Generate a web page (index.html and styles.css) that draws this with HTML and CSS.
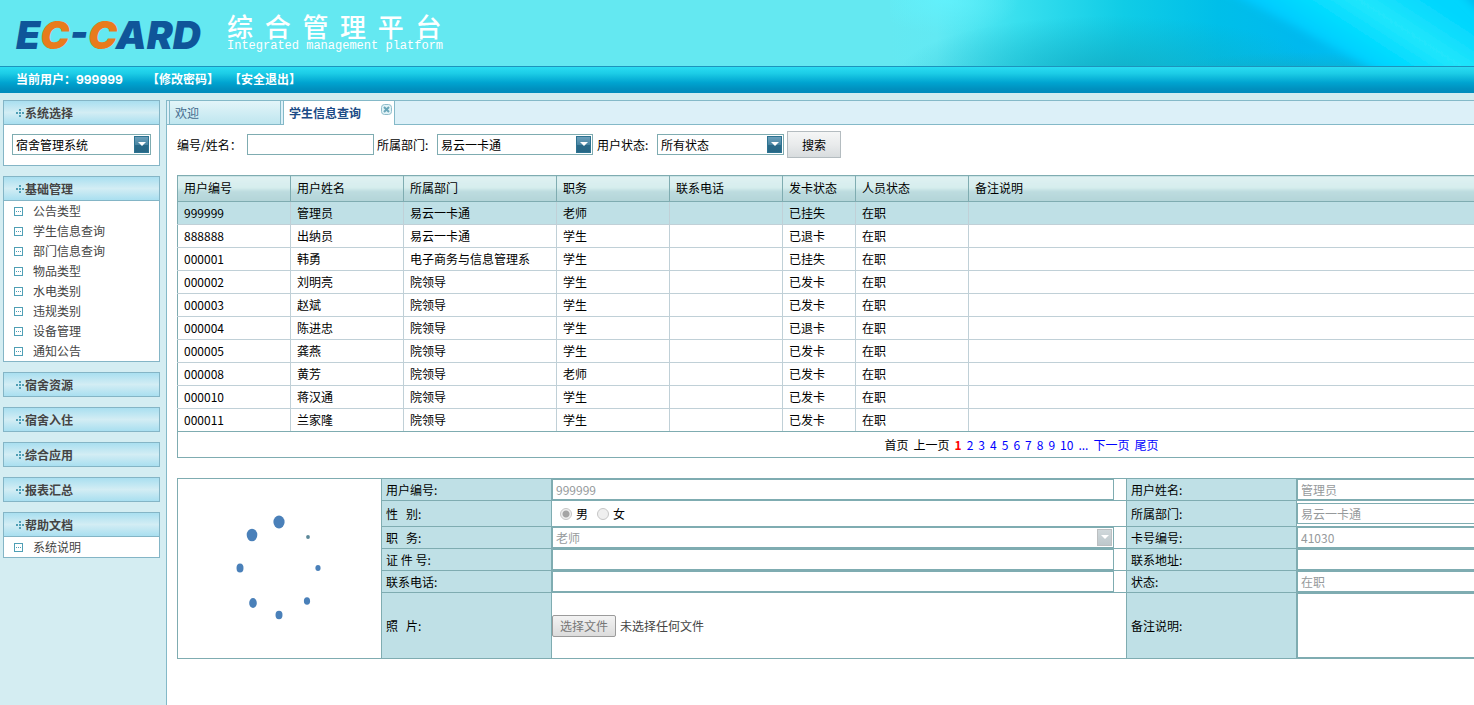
FILE: index.html
```html
<!DOCTYPE html>
<html lang="zh-CN">
<head>
<meta charset="utf-8">
<title>综合管理平台</title>
<link rel="stylesheet" href="styles.css">
</head>
<body>
<header class="banner">
  <svg class="banner-art" viewBox="0 0 584 66" preserveAspectRatio="none" aria-hidden="true">
    <defs>
      <linearGradient id="sea" x1="0" y1="0" x2="1" y2="0">
        <stop offset="0" stop-color="#64e8f1"/>
        <stop offset=".08" stop-color="#62e9f3"/>
        <stop offset=".22" stop-color="#38dfee"/>
        <stop offset=".4" stop-color="#10cce6"/>
        <stop offset=".56" stop-color="#00bfe9"/>
        <stop offset=".7" stop-color="#00b9ee"/>
        <stop offset="1" stop-color="#00c4f4"/>
      </linearGradient>
      <radialGradient id="glow">
        <stop offset="0" stop-color="#62f2fd" stop-opacity=".8"/>
        <stop offset="1" stop-color="#62f2fd" stop-opacity="0"/>
      </radialGradient>
      <radialGradient id="shade">
        <stop offset="0" stop-color="#12aac2" stop-opacity=".8"/>
        <stop offset="1" stop-color="#12aac2" stop-opacity="0"/>
      </radialGradient>
      <linearGradient id="beam" gradientUnits="userSpaceOnUse" x1="420" y1="42" x2="476" y2="-44">
        <stop offset="0" stop-color="#00c8ff"/>
        <stop offset=".3" stop-color="#00daff"/>
        <stop offset=".6" stop-color="#22e6fc"/>
        <stop offset="1" stop-color="#00d6fe"/>
      </linearGradient>
      <filter id="soft" x="-10%" y="-30%" width="120%" height="160%"><feGaussianBlur stdDeviation="4"/></filter>
    </defs>
    <rect width="584" height="66" fill="url(#sea)"/>
    <ellipse cx="55" cy="0" rx="75" ry="34" fill="url(#glow)"/>
    <ellipse cx="220" cy="72" rx="210" ry="56" fill="url(#shade)"/>
    <ellipse cx="410" cy="78" rx="150" ry="26" fill="url(#shade)"/>
    <path d="M330-12L400 24Q450 52 512 84L620 84V-12Z" fill="url(#beam)" filter="url(#soft)"/>
    <path d="M568-10L604-10V26Z" fill="#00bdf0" filter="url(#soft)"/>
  </svg>
  <div class="logo"><span class="blue">E</span><span class="orange">C</span><span class="blue">-</span><span class="orange">C</span><span class="blue">ARD</span></div>
  <div class="product">
    <h1 class="product-name">综  合  管  理  平  台</h1>
    <p class="product-sub">Integrated management platform</p>
  </div>
</header>
<nav class="userbar">
  <span class="current">当前用户：999999</span>
  <a href="#">【修改密码】</a>
  <a href="#">【安全退出】</a>
</nav>
<div class="layout">
  <aside class="sidebar">
    <section class="panel">
      <h2 class="panel-title"><i class="cross"></i><label for="system">系统选择</label></h2>
      <div class="panel-select"><span class="select"><select id="system"><option>宿舍管理系统</option></select></span></div>
    </section>
    <section class="panel">
      <h2 class="panel-title"><i class="cross"></i>基础管理</h2>
      <ul class="menu">
        <li><a href="#">公告类型</a></li>
        <li><a href="#">学生信息查询</a></li>
        <li><a href="#">部门信息查询</a></li>
        <li><a href="#">物品类型</a></li>
        <li><a href="#">水电类别</a></li>
        <li><a href="#">违规类别</a></li>
        <li><a href="#">设备管理</a></li>
        <li><a href="#">通知公告</a></li>
      </ul>
    </section>
    <section class="panel"><h2 class="panel-title"><i class="cross"></i>宿舍资源</h2></section>
    <section class="panel"><h2 class="panel-title"><i class="cross"></i>宿舍入住</h2></section>
    <section class="panel"><h2 class="panel-title"><i class="cross"></i>综合应用</h2></section>
    <section class="panel"><h2 class="panel-title"><i class="cross"></i>报表汇总</h2></section>
    <section class="panel">
      <h2 class="panel-title"><i class="cross"></i>帮助文档</h2>
      <ul class="menu"><li><a href="#">系统说明</a></li></ul>
    </section>
  </aside>
  <main class="main">
    <div class="tabs">
      <button class="tab" type="button">欢迎</button>
      <div class="tab active">
        <button class="tab-label" type="button">学生信息查询</button>
        <button class="tab-close" type="button" aria-label="关闭">
          <svg viewBox="0 0 11 11" width="11" height="11"><rect x=".5" y=".5" width="10" height="10" rx="3" fill="#e2f3f7" stroke="#8fbccb"/><path d="M3 3L8 8M8 3L3 8" stroke="#6ba6b9" stroke-width="2"/></svg>
        </button>
      </div>
    </div>
    <div class="content">
      <form class="filter">
        <label class="first" for="key">编号/姓名：</label>
        <input class="text key" id="key" type="text">
        <label for="dept">所属部门:</label>
        <span class="select dept"><select id="dept"><option>易云一卡通</option></select></span>
        <label for="state">用户状态:</label>
        <span class="select state"><select id="state"><option>所有状态</option></select></span>
        <button class="search" type="button">搜索</button>
      </form>
      <table class="grid">
        <colgroup><col class="w-m"><col class="w-m"><col class="w-l"><col class="w-m"><col class="w-m"><col class="w-s"><col class="w-m"><col></colgroup>
        <thead><tr><th>用户编号</th><th>用户姓名</th><th>所属部门</th><th>职务</th><th>联系电话</th><th>发卡状态</th><th>人员状态</th><th>备注说明</th></tr></thead>
        <tbody>
          <tr class="selected"><td>999999</td><td>管理员</td><td>易云一卡通</td><td>老师</td><td></td><td>已挂失</td><td>在职</td><td></td></tr>
          <tr><td>888888</td><td>出纳员</td><td>易云一卡通</td><td>学生</td><td></td><td>已退卡</td><td>在职</td><td></td></tr>
          <tr><td>000001</td><td>韩勇</td><td>电子商务与信息管理系</td><td>学生</td><td></td><td>已挂失</td><td>在职</td><td></td></tr>
          <tr><td>000002</td><td>刘明亮</td><td>院领导</td><td>学生</td><td></td><td>已发卡</td><td>在职</td><td></td></tr>
          <tr><td>000003</td><td>赵斌</td><td>院领导</td><td>学生</td><td></td><td>已发卡</td><td>在职</td><td></td></tr>
          <tr><td>000004</td><td>陈进忠</td><td>院领导</td><td>学生</td><td></td><td>已退卡</td><td>在职</td><td></td></tr>
          <tr><td>000005</td><td>龚燕</td><td>院领导</td><td>学生</td><td></td><td>已发卡</td><td>在职</td><td></td></tr>
          <tr><td>000008</td><td>黄芳</td><td>院领导</td><td>老师</td><td></td><td>已发卡</td><td>在职</td><td></td></tr>
          <tr><td>000010</td><td>蒋汉通</td><td>院领导</td><td>学生</td><td></td><td>已发卡</td><td>在职</td><td></td></tr>
          <tr><td>000011</td><td>兰家隆</td><td>院领导</td><td>学生</td><td></td><td>已发卡</td><td>在职</td><td></td></tr>
        </tbody>
      </table>
      <nav class="pager">
        <span>首页</span><span>上一页</span><strong>1</strong><a href="#">2</a><a href="#">3</a><a href="#">4</a><a href="#">5</a><a href="#">6</a><a href="#">7</a><a href="#">8</a><a href="#">9</a><a href="#">10</a><a href="#">...</a><a href="#">下一页</a><a href="#">尾页</a>
      </nav>
      <table class="detail">
        <colgroup><col class="c-photo"><col class="c-label"><col class="c-field"><col class="c-label"><col></colgroup>
        <tbody>
          <tr class="row">
            <td class="photo" rowspan="6">
              <svg class="spinner" viewBox="2 0 90 110" width="90" height="110" fill="#4a80b9" aria-label="加载中">
                <ellipse cx="46" cy="8" rx="5.6" ry="6.5"/>
                <ellipse cx="19" cy="21" rx="5.3" ry="6.3"/>
                <ellipse cx="7" cy="54" rx="3.5" ry="4.6"/>
                <ellipse cx="20" cy="89" rx="3.8" ry="5"/>
                <ellipse cx="46" cy="101" rx="3.5" ry="4.2"/>
                <ellipse cx="74" cy="87" rx="3.1" ry="3.8"/>
                <ellipse cx="85" cy="54" rx="2.6" ry="3"/>
                <ellipse cx="75" cy="23" rx="1.9" ry="2.1" fill="#5b8798"/>
              </svg>
            </td>
            <th><label for="f1">用户编号:</label></th>
            <td><input class="text wide" id="f1" type="text" value="999999" disabled></td>
            <th><label for="f2">用户姓名:</label></th>
            <td><input class="text wide" id="f2" type="text" value="管理员" disabled></td>
          </tr>
          <tr class="row-tall">
            <th>性   别:</th>
            <td>
              <div class="radios">
                <label><input type="radio" name="sex" checked disabled>男</label>
                <label><input type="radio" name="sex" disabled>女</label>
              </div>
            </td>
            <th><label for="f3">所属部门:</label></th>
            <td><input class="text wide" id="f3" type="text" value="易云一卡通" disabled></td>
          </tr>
          <tr class="row">
            <th><label for="f4">职   务:</label></th>
            <td><span class="select wide off"><select id="f4" disabled><option>老师</option></select></span></td>
            <th><label for="f5">卡号编号:</label></th>
            <td><input class="text wide" id="f5" type="text" value="41030" disabled></td>
          </tr>
          <tr class="row">
            <th><label for="f6">证 件 号:</label></th>
            <td><input class="text wide" id="f6" type="text"></td>
            <th><label for="f7">联系地址:</label></th>
            <td><input class="text wide" id="f7" type="text"></td>
          </tr>
          <tr class="row">
            <th><label for="f8">联系电话:</label></th>
            <td><input class="text wide" id="f8" type="text"></td>
            <th><label for="f9">状态:</label></th>
            <td><input class="text wide" id="f9" type="text" value="在职" disabled></td>
          </tr>
          <tr class="row-note">
            <th><label for="f10">照   片:</label></th>
            <td><div class="file"><input id="f10" type="file" disabled><span class="file-button">选择文件</span><span>未选择任何文件</span></div></td>
            <th><label for="f11">备注说明:</label></th>
            <td><textarea class="text wide note" id="f11"></textarea></td>
          </tr>
        </tbody>
      </table>
    </div>
  </main>
</div>
</body>
</html>
```
FILE: styles.css
```css
*, *::before, *::after { box-sizing: border-box; }

body {
  margin: 0;
  min-height: 100vh;
  display: flex;
  flex-direction: column;
  background: #d2ecf0;
  color: #000;
  font: 12px/18px "Noto Sans CJK SC", sans-serif;
  overflow: hidden;
}

h1, h2, p, ul { margin: 0; padding: 0; }
ul { list-style: none; }
a { text-decoration: none; }
button, input, select, textarea { font: inherit; margin: 0; }

/* Banner */
.banner {
  position: relative;
  display: flex;
  align-items: flex-start;
  height: 67px;
  padding-left: 16px;
  background: #64e8f1;
  border-bottom: 1px solid #1b94bd;
  overflow: hidden;
}
.banner-art {
  position: absolute;
  top: 0;
  right: 0;
  width: 584px;
  height: 66px;
}
.logo {
  width: 211px;
  padding-top: 15px;
  font: italic 900 39px/40px Inter, "Liberation Sans", sans-serif;
  white-space: nowrap;
}
.blue { color: #0f5599; }
.orange { color: #e87b1c; }
.product { padding-top: 12px; color: #fff; }
.product-name {
  font-size: 26px;
  font-weight: 500;
  line-height: 28px;
  white-space: pre;
}
.product-sub { font: 12px/12px "Liberation Mono", monospace; }

.userbar {
  display: flex;
  align-items: center;
  height: 26px;
  padding-left: 16px;
  background: linear-gradient(#2adcf2, #1ccce6 25%, #00a4d0 60%, #0090bf 85%, #008cbc);
  color: #fff;
  font-family: Inter, "Noto Sans CJK SC", sans-serif;
  font-weight: 700;
}
.userbar a { color: #fff; margin-right: 10px; }
.current { width: 131px; }

/* Columns */
.layout {
  flex: 1;
  display: flex;
  padding-top: 7px;
}
.sidebar {
  flex: none;
  width: 166px;
  padding: 0 6px 0 3px;
  background: #d4edf2;
}
.panel { margin-bottom: 10px; border: 1px solid #84b5c6; background: #fff; }
.panel-title {
  display: flex;
  align-items: center;
  height: 23px;
  padding-left: 12px;
  gap: 1px;
  background: linear-gradient(#a9dff0, #d3edf4 50%, #a9dff0);
  color: #444;
  font-size: 12px;
  font-weight: 700;
}
.panel-title:not(:last-child) { height: 24px; border-bottom: 1px solid #84b5c6; }
.cross {
  width: 8px;
  height: 8px;
  background:
    repeating-linear-gradient(90deg, #4f9fb5 0 2px, transparent 2px 3px) 0 3px / 8px 2px no-repeat,
    repeating-linear-gradient(#4f9fb5 0 2px, transparent 2px 3px) 3px 0 / 2px 8px no-repeat;
}
.panel-select { display: flex; padding: 9px 8px 10px; }
.panel-select .select { flex: 1; }
.menu a {
  display: flex;
  align-items: center;
  height: 20px;
  padding-left: 10px;
  color: #444;
}
.menu a::before {
  content: "";
  width: 9px;
  height: 9px;
  margin-right: 10px;
  border: 1px solid #4f9fb5;
  background: repeating-linear-gradient(90deg, #4f9fb5 0 1px, transparent 1px 2px) 1px 3px / 5px 1px no-repeat;
}

/* Form controls */
.text, .select select {
  height: 21px;
  padding: 0 3px;
  border: 1px solid #7facb1;
  border-radius: 0;
  background: #fff;
  outline: 0;
}
.text:disabled, .select select:disabled { color: #969a9c; opacity: 1; }
.select { position: relative; display: flex; }
.select select { width: 100%; appearance: none; line-height: 19px; }
.select::before {
  content: "";
  position: absolute;
  top: 2px;
  right: 2px;
  width: 15px;
  height: 17px;
  border: 1px solid #2d7391;
  background: linear-gradient(#6b9fba, #4a86a3 50%, #2a6a89 50%, #276786);
  pointer-events: none;
}
.select::after {
  content: "";
  position: absolute;
  top: 8px;
  right: 5px;
  border: 4px solid transparent;
  border-top-color: #fff;
  border-bottom: 0;
  pointer-events: none;
}
.select.off::before { border-color: #bcbfc1; background: linear-gradient(#d0d8db, #bdc8cc); }

/* Main */
.main {
  flex: 1;
  min-width: 0;
  border-left: 1px solid #84b9c8;
  border-top: 1px solid #84b9c8;
  background: #fff;
  overflow: hidden;
}
.tabs {
  display: flex;
  gap: 2px;
  height: 24px;
  padding-left: 2px;
  background: #dcf0f8;
  border-bottom: 1px solid #84b9c8;
}
.tab {
  display: flex;
  align-items: center;
  width: 112px;
  height: 23px;
  padding: 0 5px;
  border: solid #84b9c8;
  border-width: 0 1px;
  background: linear-gradient(#e3f5f9, #bfe6ef);
  color: #446a8c;
}
.tab.active {
  height: 24px;
  justify-content: space-between;
  padding-right: 2px;
  background: #fff;
}
.tab-label { padding: 0; border: 0; background: none; color: #1c4b86; font-weight: 700; }
.tab-close { display: flex; padding: 0 0 8px; border: 0; background: none; }

.content { min-width: 1709px; padding: 6px 10px 20px; }
.filter { display: flex; align-items: center; height: 27px; }
.filter label { width: 60px; white-space: nowrap; }
.filter .first { width: 70px; }
.key, .state { width: 127px; margin-right: 3px; }
.dept { width: 156px; margin-right: 4px; }
.search {
  width: 54px;
  height: 27px;
  padding: 0;
  border: 1px solid #b4bcc0;
  background: linear-gradient(#f5f6f6, #e9ebec 50%, #d8dcde);
}

/* Result grid */
.grid, .detail {
  width: 100%;
  table-layout: fixed;
  border-collapse: collapse;
  border: 1px solid #7facb1;
}
.grid { margin-top: 17px; }
.w-s { width: 73px; }
.w-m { width: 113px; }
.w-l { width: 153px; }
.grid th, .grid td {
  height: 23px;
  padding: 0 6px 1px;
  border: 1px solid #c0d0d7;
  text-align: left;
  font-weight: 400;
  line-height: 18px;
}
.grid th {
  height: 26px;
  border-color: #7facb1;
  background: linear-gradient(#dff1f2, #d6eded 45%, #bddcdf 60%, #b3d4d8);
}
.grid tr > :first-child { border-left-color: #7facb1; }
.grid tbody tr:first-child td { border-top-color: #7facb1; }
.grid tbody tr:last-child td { border-bottom-color: #7facb1; }
.selected { background: #bfe0e6; }
.pager {
  display: flex;
  justify-content: center;
  align-items: center;
  gap: 5px;
  height: 26px;
  border: solid #7facb1;
  border-width: 0 1px 1px;
}
.pager a { color: #00f; }
.pager strong { color: #f00; }

/* Record detail */
.detail { margin-top: 20px; }
.detail th, .detail td { padding: 0; border: 1px solid #7facb1; }
.detail th {
  padding-left: 4px;
  background: #bfe0e6;
  text-align: left;
  font-weight: 400;
  white-space: pre;
}
.c-photo { width: 204px; }
.c-label { width: 170px; }
.c-field { width: 575px; }
.row { height: 22px; }
.row-tall { height: 26px; }
.row-note { height: 66px; }
.wide { width: 562px; }
input.wide, textarea.wide { display: block; }
.note { height: 65px; resize: none; }
.spinner { display: block; margin: 0 auto; }
.radios { display: flex; gap: 9px; padding-left: 8px; }
.radios label { display: flex; align-items: center; gap: 4px; }
.radios input {
  appearance: none;
  width: 12px;
  height: 12px;
  border: 1px solid #c6c6c6;
  border-radius: 50%;
  background: #efefef;
}
.radios input:checked { background: radial-gradient(circle, #a5a5a5 0 3px, #efefef 4px); }
.file { position: relative; display: flex; align-items: center; gap: 4px; color: #444; }
.file input { position: absolute; inset: 0; width: 160px; opacity: 0; }
.file-button {
  width: 64px;
  height: 22px;
  border: 1px solid #9b9b9b;
  border-radius: 2px;
  background: linear-gradient(#f3f3f3, #dcdcdc);
  color: #777;
  text-align: center;
  line-height: 20px;
}
```
